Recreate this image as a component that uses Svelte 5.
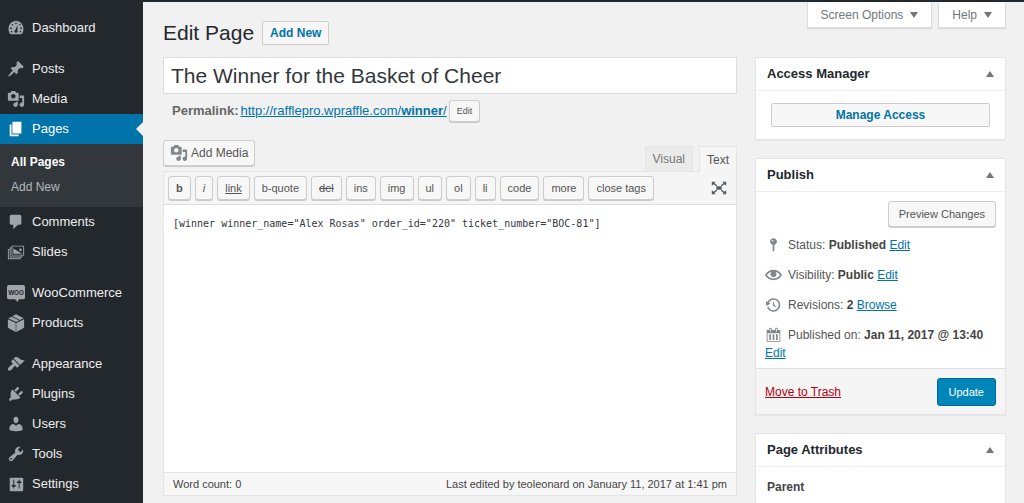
<script lang="ts">
    type Item = { label: string; icon: string; gap?: boolean };

    const icons: { [key: string]: string } = {
        dashboard:
            "M3.8 17h12.4c1.4-1.6 2.1-3.8 2.1-6 0-5-3.7-9-8.3-9S1.7 6 1.7 11c0 2.2.7 4.4 2.100 6zM9.300 3.800h1.400v1.800H9.300zM5.300 5.500h1.500v1.500H5.300zM13.600 5.500h1.500v1.500h-1.500zM3.400 9.500h1.800v1.500H3.400zM14.800 9.500h1.800v1.500h-1.800zM4.300 13.300h1.500v1.500H4.300zM14.200 13.300h1.500v1.500h-1.500zM11.400 7l.3 6.500c0 1-.8 1.700-1.700 1.700s-1.700-.8-1.700-1.700c0-.7.4-1.300 1.200-1.600z",
        post: "M10.44 3.02l1.82-1.82 6.36 6.35-1.83 1.82c-1.05-.68-2.48-.57-3.41.36l-.75.75c-.92.93-1.04 2.35-.35 3.41l-1.83 1.82-2.41-2.41-2.8 2.79c-.42.42-3.38 2.71-3.8 2.29s1.86-3.39 2.28-3.81l2.79-2.79L4.1 9.36l1.83-1.82c1.05.69 2.48.57 3.4-.36l.75-.75c.93-.92 1.05-2.35.36-3.41z",
        media: "M13 11V4c0-.55-.45-1-1-1h-1.67L9 1H5L3.67 3H2c-.55 0-1 .45-1 1v7c0 .55.45 1 1 1h10c.55 0 1-.45 1-1zM7 4.5c1.38 0 2.5 1.12 2.5 2.5S8.38 9.5 7 9.5 4.5 8.38 4.5 7 5.62 4.5 7 4.5zM14 6h5v10.5c0 1.38-1.12 2.5-2.5 2.5S14 17.88 14 16.5s1.12-2.5 2.5-2.5c.17 0 .34.02.5.05V9h-3V6zm-4 8.05V13h2v3.5c0 1.38-1.12 2.5-2.5 2.5S7 17.88 7 16.5 8.12 14 9.5 14c.17 0 .34.02.5.05z",
        page: "M6 15V2h10v13H6zm-1 1h8v2H3V5h2v11z",
        comments:
            "M5 2h9c1.1 0 2 .9 2 2v7c0 1.1-.9 2-2 2h-2l-5 5v-5H5c-1.1 0-2-.9-2-2V4c0-1.1.9-2 2-2z",
        slides: "M5 3h14v11h-2v2h-2v2H1V7h2V5h2V3zm13 10V4H6v9h12zm-3-4c-.83 0-1.5-.67-1.5-1.5S14.17 6 15 6s1.5.67 1.5 1.5S15.83 9 15 9zM7 6l10 6H7V6zm7 11v-1H3V8H2v9h12zm2-2v-1H5V6H4v9h12z",
        products:
            "M9.7 10L1 5.700v9.600L9.700 20zM10.300 10L19 5.700v9.600L10.300 20zM10 9l3.600-1.800L5 3 1.500 4.800zM14.400 6.800l4.100-2L10 .4 5.900 2.500z",
        appearance:
            "M14.48 11.06L7.41 3.99l1.5-1.5c.5-.56 2.3-.47 3.51.32 1.21.8 1.43 1.28 2.91 2.1 1.18.64 2.45 1.26 4.45.85zm-.71.71L6.7 4.7 4.93 6.47c-.39.39-.39 1.02 0 1.41l1.06 1.06c.39.39.39 1.03 0 1.42-.6.6-1.43 1.11-2.21 1.69-.35.26-.7.53-1.01.84C1.43 14.23.4 16.08 1.4 17.07c.99 1 2.84-.03 4.18-1.36.31-.31.58-.66.85-1.02.57-.78 1.08-1.61 1.69-2.21.39-.39 1.02-.39 1.41 0l1.06 1.06c.39.39 1.02.39 1.41 0z",
        plugins:
            "M13.11 4.36L9.87 7.6 8 5.73l3.24-3.24c.35-.34 1.05-.2 1.56.32.52.51.66 1.21.31 1.55zm-8 1.77l.91-1.12 9.01 9.01-1.19.84c-.71.71-2.63 1.16-3.82 1.16H6.14L4.9 17.26c-.59.59-1.54.59-2.12 0-.59-.58-.59-1.53 0-2.12l1.24-1.24v-3.88c0-1.13.4-3.19 1.09-3.89zm7.26 3.97l3.24-3.24c.34-.35 1.04-.21 1.55.31.52.51.66 1.21.31 1.55l-3.24 3.25z",
        users: "M10 9.25c-2.27 0-2.73-3.44-2.73-3.44C7 4.02 7.82 2 9.97 2c2.16 0 2.98 2.02 2.71 3.81 0 0-.41 3.44-2.68 3.44zm0 2.57L12.72 10c2.39 0 4.52 2.33 4.52 4.53v2.49s-3.65 1.13-7.24 1.13c-3.65 0-7.24-1.13-7.24-1.13v-2.49c0-2.25 1.94-4.48 4.47-4.48z",
        tools: "M16.68 9.77c-1.34 1.34-3.3 1.67-4.95.99l-5.41 6.52c-.99.99-2.59.99-3.58 0s-.99-2.59 0-3.57l6.52-5.42c-.68-1.65-.35-3.61.99-4.95 1.28-1.28 3.12-1.62 4.72-1.06l-2.89 2.89 2.82 2.82 2.86-2.87c.53 1.58.18 3.39-1.08 4.65zM3.81 16.21c.4.39 1.04.39 1.43 0 .4-.4.4-1.04 0-1.43-.39-.4-1.03-.4-1.43 0-.39.39-.39 1.03 0 1.43z",
        settings:
            "M18 16V4c0-.55-.45-1-1-1H4c-.55 0-1 .45-1 1v13c0 .55.45 1 1 1h13c.55 0 1-.45 1-1zM8 11h1c.55 0 1 .45 1 1s-.45 1-1 1H8v1.5c0 .28-.22.5-.5.5s-.5-.22-.5-.5V13H6c-.55 0-1-.45-1-1s.45-1 1-1h1V5.5c0-.28.22-.5.5-.5s.5.22.5.5V11zm5-2h-1c-.55 0-1-.45-1-1s.45-1 1-1h1V5.5c0-.28.22-.5.5-.5s.5.22.5.5V7h1c.55 0 1 .45 1 1s-.45 1-1 1h-1v5.5c0 .28-.22.5-.5.5s-.5-.22-.5-.5V9z",
        status: "M14 6c0 1.86-1.28 3.41-3 3.86V16c0 1-2 2-2 2V9.86C7.28 9.41 6 7.86 6 6c0-2.21 1.79-4 4-4s4 1.79 4 4zM8 5c0 .55.45 1 1 1s1-.45 1-1-.45-1-1-1-1 .45-1 1z",
        visibility:
            "M19.7 9.4C17.7 6 14 3.9 10 3.9S2.3 6 .3 9.4L0 10l.3.6c2 3.4 5.7 5.5 9.7 5.5s7.7-2.1 9.7-5.5l.3-.6-.3-.6zM10 14.1c-3.1 0-6-1.6-7.7-4.1C3.6 8 5.7 6.6 8 6.1c-.9.6-1.5 1.7-1.5 2.9 0 1.9 1.6 3.5 3.5 3.5s3.5-1.6 3.5-3.5c0-1.2-.6-2.3-1.5-2.9 2.3.5 4.4 1.9 5.7 3.9-1.7 2.5-4.6 4.1-7.7 4.1z",
        revisions:
            "M13.65 2.88c3.93 2.01 5.48 6.84 3.47 10.77s-6.83 5.48-10.77 3.47c-1.87-.96-3.2-2.56-3.86-4.4l1.64-1.03c.45 1.57 1.52 2.95 3.08 3.76 3.01 1.54 6.69.35 8.23-2.66 1.55-3.01.36-6.69-2.65-8.24C9.78 3.01 6.1 4.2 4.56 7.21l1.88.97-4.95 3.08-.39-5.82 1.78.91C4.9 2.4 9.75.89 13.65 2.88zm-4.36 7.83C9.11 10.53 9 10.28 9 10c0-.07.03-.12.04-.19h-.01L10 5l.97 4.81L14 13l-4.5-2.12.02-.02c-.08-.04-.16-.09-.23-.15z",
        calendar:
            "M15 4h3v14H2V4h3V3c0-.83.67-1.5 1.5-1.5S8 2.17 8 3v1h4V3c0-.83.67-1.5 1.5-1.5S15 2.17 15 3v1zM6 3v2.5c0 .28.22.5.5.5s.5-.22.5-.5V3c0-.28-.22-.5-.5-.5S6 2.72 6 3zm7 0v2.5c0 .28.22.5.5.5s.5-.22.5-.5V3c0-.28-.22-.5-.5-.5s-.5.22-.5.5zm4 14V8H3v9h14zM7 16V9H5v7h2zm4 0V9H9v7h2zm4 0V9h-2v7h2z",
        fullscreen:
            "M2 3h4L5 4.500 8 7 7 8 4 5.700 2 7.500zM18 3h-4l1 1.500L12 7l1 1 3-2.300 2 1.800zM2 17h4l-1-1.500L8 13l-1-1-3 2.300-2-1.800zM18 17h-4l1-1.500-3-2.500 1-1 3 2.300 2-1.800zM7 8h6v4H7z",
    };

    const topMenu: Item[] = [
        { label: "Dashboard", icon: "dashboard" },
        { label: "Posts", icon: "post", gap: true },
        { label: "Media", icon: "media" },
    ];

    const menu: Item[] = [
        { label: "Comments", icon: "comments" },
        { label: "Slides", icon: "slides" },
        { label: "WooCommerce", icon: "woo", gap: true },
        { label: "Products", icon: "products" },
        { label: "Appearance", icon: "appearance", gap: true },
        { label: "Plugins", icon: "plugins" },
        { label: "Users", icon: "users" },
        { label: "Tools", icon: "tools" },
        { label: "Settings", icon: "settings" },
    ];

    const quicktags = [
        "b",
        "i",
        "link",
        "b-quote",
        "del",
        "ins",
        "img",
        "ul",
        "ol",
        "li",
        "code",
        "more",
        "close tags",
    ];

    let title = "The Winner for the Basket of Cheer";
    let content =
        '[winner winner_name="Alex Rosas" order_id="220" ticket_number="BOC-81"]';
</script>

{#snippet icon(name: string)}
    <svg class="icon" viewBox="0 0 20 20" aria-hidden="true">
        {#if name === "woo"}
            <path d="M2 1h16q2 0 2 2v12q0 2-2 2h-5l-1 3-3-3H2q-2 0-2-2V3q0-2 2-2z" />
            <text x="10" y="12" class="woo">WOO</text>
        {:else}
            <path fill-rule="evenodd" d={icons[name]} />
        {/if}
    </svg>
{/snippet}

{#snippet menuItem(item: Item)}
    <li class:gap={item.gap}>
        <a href="#{item.icon}" class="menu-link">{@render icon(item.icon)}{item.label}</a>
    </li>
{/snippet}

{#snippet boxHead(name: string)}
    <header class="box-head">
        <h2>{name}</h2>
        <button class="toggle" aria-label="Toggle panel: {name}">
            <svg viewBox="0 0 8 6"><path d="M4 0l4 6H0z" /></svg>
        </button>
    </header>
{/snippet}

<div class="admin">
    <nav class="sidebar">
        <ul>
            {#each topMenu as item}
                {@render menuItem(item)}
            {/each}
            <li>
                <a href="#pages" class="menu-link current">{@render icon("page")}Pages</a>
                <ul class="submenu">
                    <li><a href="#all" class="active">All Pages</a></li>
                    <li><a href="#new">Add New</a></li>
                </ul>
            </li>
            {#each menu as item}
                {@render menuItem(item)}
            {/each}
        </ul>
    </nav>

    <main>
        <div class="top">
            <div class="heading">
                <h1>Edit Page</h1>
                <a href="#new" class="add-new">Add New</a>
            </div>
            <div class="screen-meta">
                {#each ["Screen Options", "Help"] as label}
                    <button>
                        {label}
                        <svg viewBox="0 0 8 6" aria-hidden="true"><path d="M0 0h8L4 6z" /></svg>
                    </button>
                {/each}
            </div>
        </div>

        <div class="columns">
            <section>
                <input class="title" aria-label="Title" bind:value={title} />
                <div class="permalink">
                    <strong>Permalink:</strong>
                    <a href="#winner">http://rafflepro.wpraffle.com/<b>winner</b>/</a>
                    <button class="button tiny">Edit</button>
                </div>

                <div class="editor-tools">
                    <button class="button media">{@render icon("media")}Add Media</button>
                    <div class="tabs">
                        <button>Visual</button>
                        <button class="selected">Text</button>
                    </div>
                </div>
                <div class="editor">
                    <div class="toolbar">
                        {#each quicktags as tag}
                            <button class="button tag {tag}">{tag}</button>
                        {/each}
                        <button class="fullscreen" aria-label="Distraction-free writing mode">
                            {@render icon("fullscreen")}
                        </button>
                    </div>
                    <textarea aria-label="Content" spellcheck="false" bind:value={content}></textarea>
                    <div class="status-bar">
                        <span>Word count: 0</span>
                        <span>Last edited by teoleonard on January 11, 2017 at 1:41 pm</span>
                    </div>
                </div>
            </section>

            <aside>
                <div class="box">
                    {@render boxHead("Access Manager")}
                    <div class="access">
                        <a href="#access">Manage Access</a>
                    </div>
                </div>

                <div class="box">
                    {@render boxHead("Publish")}
                    <div class="preview">
                        <button class="button">Preview Changes</button>
                    </div>
                    <div class="misc">
                        <p>{@render icon("status")}Status: <b>Published</b> <a href="#status">Edit</a></p>
                        <p>{@render icon("visibility")}Visibility: <b>Public</b> <a href="#visibility">Edit</a></p>
                        <p>{@render icon("revisions")}Revisions: <b>2</b> <a href="#revisions">Browse</a></p>
                        <p>{@render icon("calendar")}Published on: <b>Jan 11, 2017 @ 13:40</b> <a href="#date">Edit</a></p>
                    </div>
                    <footer class="actions">
                        <a href="#trash">Move to Trash</a>
                        <button>Update</button>
                    </footer>
                </div>

                <div class="box">
                    {@render boxHead("Page Attributes")}
                    <p class="parent">Parent</p>
                </div>
            </aside>
        </div>
    </main>
</div>

<style>
    :global(body) {
        background: #f1f1f1;
    }

    .admin {
        display: flex;
        box-sizing: border-box;
        height: 100vh;
        overflow: hidden;
        border-top: 2px solid #23282d;
        font: 12px/18px "Liberation Sans", Arial, sans-serif;
        color: #555;
    }

    .admin :is(button, input, textarea) {
        font-family: inherit;
        box-sizing: border-box;
    }

    a {
        color: #0073aa;
    }

    .icon {
        width: 18px;
        height: 18px;
        flex: none;
        fill: #82878c;
    }

    ul {
        margin: 0;
        padding: 0;
        list-style: none;
    }

    .sidebar {
        flex: none;
        width: 143px;
        padding-top: 11px;
        background: #23282d;
    }

    .menu-link {
        position: relative;
        display: flex;
        align-items: center;
        gap: 7px;
        height: 30px;
        padding-left: 7px;
        font-size: 13px;
        color: #eee;
        text-decoration: none;
    }

    .menu-link .icon {
        fill: #a0a5aa;
    }

    .gap {
        margin-top: 11px;
    }

    .menu-link.current {
        background: #0073aa;
        color: #fff;
    }

    .menu-link.current .icon {
        fill: #fff;
    }

    .current::after {
        content: "";
        position: absolute;
        right: 0;
        top: 8px;
        border: 7px solid transparent;
        border-right-color: #f1f1f1;
        border-left: 0;
    }

    .icon .woo {
        font-size: 7px;
        font-weight: bold;
        text-anchor: middle;
        fill: #23282d;
    }

    .submenu {
        padding: 6px 0 7px 11px;
        background: #32373c;
    }

    .submenu a {
        display: block;
        line-height: 25px;
        color: #b4b9be;
        text-decoration: none;
    }

    .submenu .active {
        color: #fff;
        font-weight: bold;
    }

    main {
        flex: 1;
        min-width: 0;
        padding: 0 18px 0 20px;
    }

    .top {
        display: flex;
        justify-content: space-between;
        align-items: flex-start;
        height: 55px;
    }

    .heading {
        display: flex;
        align-items: center;
        gap: 8px;
        padding-top: 18px;
    }

    h1 {
        margin: 0;
        font-size: 21px;
        font-weight: normal;
        line-height: 25px;
        color: #23282d;
    }

    .add-new {
        padding: 2px 7px;
        border: 1px solid #ccc;
        border-radius: 2px;
        background: #f7f7f7;
        font-weight: bold;
        text-decoration: none;
    }

    .screen-meta {
        display: flex;
        gap: 6px;
    }

    .screen-meta button {
        display: flex;
        align-items: center;
        gap: 7px;
        height: 26px;
        padding: 0 13px;
        border: 1px solid #ddd;
        border-top: 0;
        background: #fff;
        box-shadow: 0 1px 1px rgba(0, 0, 0, 0.1);
        font-size: 12px;
        color: #72777c;
    }

    .screen-meta svg,
    .toggle svg {
        width: 8px;
        height: 6px;
        fill: #72777c;
    }

    .columns {
        display: grid;
        grid-template-columns: minmax(0, 1fr) 251px;
        gap: 18px;
        align-items: start;
    }

    .title {
        display: block;
        width: 100%;
        height: 37px;
        padding: 0 7px;
        border: 1px solid #ddd;
        background: #fff;
        font-size: 21px;
        color: #32373c;
    }

    .permalink {
        display: flex;
        align-items: center;
        gap: 2px;
        margin: 6px 0 18px 9px;
        font-size: 13px;
        color: #666;
    }

    .button {
        height: 26px;
        padding: 0 8px;
        border: 1px solid #ccc;
        border-radius: 3px;
        background: #f7f7f7;
        box-shadow: 0 1px 0 #ccc;
        font-size: 12px;
        color: #555;
    }

    .permalink .tiny {
        height: 22px;
        padding: 0 7px;
        font-size: 9px;
    }

    .editor-tools {
        display: flex;
        justify-content: space-between;
        align-items: flex-start;
        height: 31px;
    }

    .media {
        display: flex;
        align-items: center;
        gap: 3px;
        padding: 0 6px;
    }

    .tabs {
        display: flex;
        gap: 6px;
        padding-top: 6px;
    }

    .tabs button {
        height: 25px;
        padding: 0 7px;
        border: 1px solid #e5e5e5;
        border-bottom: 0;
        background: #ebebeb;
        font-size: 12px;
        color: #777;
    }

    /* covers the top border of the editor frame */
    .tabs .selected {
        position: relative;
        height: 26px;
        background: #f5f5f5;
        color: #555;
    }

    .editor {
        border: 1px solid #e5e5e5;
        background: #fff;
    }

    .toolbar {
        display: flex;
        align-items: center;
        gap: 4px;
        height: 32px;
        padding: 0 8px 0 4px;
        border-bottom: 1px solid #ddd;
        background: #f5f5f5;
    }

    .tag {
        height: 24px;
        padding: 0 7px;
        font-size: 11px;
        white-space: nowrap;
    }

    .b {
        font-weight: bold;
    }

    .i {
        font-style: italic;
    }

    .link {
        text-decoration: underline;
    }

    .del {
        text-decoration: line-through;
    }

    .fullscreen {
        display: flex;
        margin-left: auto;
        padding: 0;
        border: 0;
        background: none;
    }

    .fullscreen .icon {
        fill: #555d66;
    }

    .admin textarea {
        display: block;
        width: 100%;
        height: 267px;
        padding: 10px 9px;
        border: 0;
        resize: none;
        font: 10px/18px "DejaVu Sans Mono", "Liberation Mono", monospace;
        color: #32373c;
    }

    .status-bar {
        display: flex;
        justify-content: space-between;
        padding: 2px 9px;
        border-top: 1px solid #e5e5e5;
        background: #f7f7f7;
        font-size: 11px;
        color: #444;
    }

    aside {
        display: grid;
        gap: 18px;
    }

    .box {
        border: 1px solid #e5e5e5;
        background: #fff;
        box-shadow: 0 1px 1px rgba(0, 0, 0, 0.04);
    }

    .box-head {
        display: flex;
        justify-content: space-between;
        align-items: center;
        height: 32px;
        padding: 0 11px;
        border-bottom: 1px solid #eee;
    }

    h2 {
        margin: 0;
        font-size: 13px;
        color: #23282d;
    }

    .toggle {
        display: flex;
        padding: 0;
        border: 0;
        background: none;
    }

    .access {
        padding: 12px 15px;
    }

    .access a {
        display: block;
        border: 1px solid #ccc;
        border-radius: 2px;
        background: #f7f7f7;
        font-weight: bold;
        line-height: 22px;
        text-align: center;
        text-decoration: none;
    }

    .preview {
        display: flex;
        justify-content: flex-end;
        padding: 9px 9px 0;
    }

    .preview .button {
        font-size: 11px;
        padding: 0 10px;
    }

    .misc {
        display: grid;
        gap: 12px;
        padding: 9px 9px 6px;
    }

    .misc p {
        margin: 0;
    }

    .misc .icon {
        width: 17px;
        margin-right: 6px;
        vertical-align: top;
    }

    .misc b {
        color: #444;
    }

    .actions {
        display: flex;
        justify-content: space-between;
        align-items: center;
        height: 45px;
        padding: 0 9px;
        border-top: 1px solid #ddd;
        background: #f5f5f5;
    }

    .actions a {
        color: #b4000f;
    }

    .actions button {
        height: 28px;
        padding: 0 11px;
        border: 1px solid #006799;
        border-radius: 3px;
        background: #0085ba;
        font-size: 11px;
        color: #fff;
    }

    .parent {
        margin: 0;
        padding: 11px;
        font-weight: bold;
        color: #444;
    }
</style>
